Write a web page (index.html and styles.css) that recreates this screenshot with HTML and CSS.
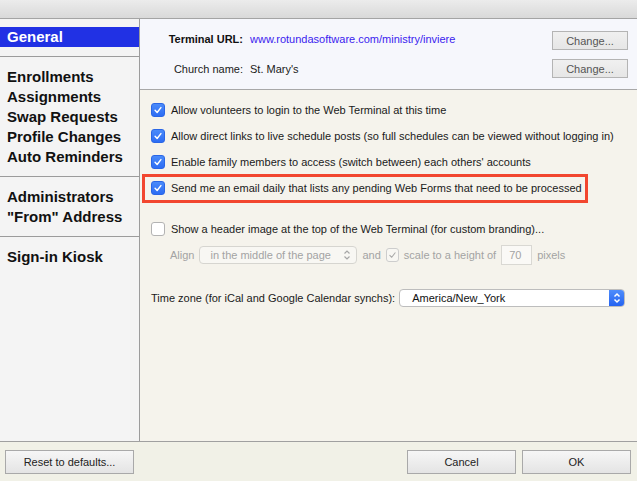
FILE: index.html
```html
<!DOCTYPE html>
<html lang="en">
<head>
  <meta charset="UTF-8">
  <title>Web Terminal Settings</title>
  <link rel="stylesheet" href="styles.css">
</head>
<body>
  <div class="window">
    <div class="titlebar"></div>

    <div class="content">
      <div class="sidebar">
        <ul class="nav-group first">
          <li class="active">General</li>
        </ul>
        <ul class="nav-group">
          <li>Enrollments</li>
          <li>Assignments</li>
          <li>Swap Requests</li>
          <li>Profile Changes</li>
          <li>Auto Reminders</li>
        </ul>
        <ul class="nav-group">
          <li>Administrators</li>
          <li>"From" Address</li>
        </ul>
        <ul class="nav-group">
          <li>Sign-in Kiosk</li>
        </ul>
      </div>

      <div class="main">
        <div class="terminal">
          <span class="label strong">Terminal URL:</span>
          <a class="value link" href="#">www.rotundasoftware.com/ministry/inviere</a>
          <button class="btn change">Change...</button>
          <span class="label">Church name:</span>
          <span class="value">St. Mary's</span>
          <button class="btn change">Change...</button>
        </div>

        <div class="options">
          <div class="row">
            <span class="cb checked"><svg viewBox="0 0 14 14"><path d="M3.6 7.4 L6 9.9 L10.4 4.2"/></svg></span>
            <span>Allow volunteers to login to the Web Terminal at this time</span>
          </div>
          <div class="row">
            <span class="cb checked"><svg viewBox="0 0 14 14"><path d="M3.6 7.4 L6 9.9 L10.4 4.2"/></svg></span>
            <span>Allow direct links to live schedule posts (so full schedules can be viewed without logging in)</span>
          </div>
          <div class="row">
            <span class="cb checked"><svg viewBox="0 0 14 14"><path d="M3.6 7.4 L6 9.9 L10.4 4.2"/></svg></span>
            <span>Enable family members to access (switch between) each others' accounts</span>
          </div>
          <div class="row">
            <span class="highlight">
              <span class="cb checked"><svg viewBox="0 0 14 14"><path d="M3.6 7.4 L6 9.9 L10.4 4.2"/></svg></span>
              <span>Send me an email daily that lists any pending Web Forms that need to be processed</span>
            </span>
          </div>

          <div class="row spaced">
            <span class="cb"></span>
            <span>Show a header image at the top of the Web Terminal (for custom branding)...</span>
          </div>
          <div class="row sub disabled">
            <span>Align</span>
            <span class="select">in the middle of the page
              <svg class="chevrons" viewBox="0 0 8 12"><path d="M1.5 4.5 L4 2 L6.5 4.5 M1.5 7.5 L4 10 L6.5 7.5"/></svg>
            </span>
            <span>and</span>
            <span class="cb dim"><svg viewBox="0 0 14 14"><path d="M3.6 7.4 L6 9.9 L10.4 4.2"/></svg></span>
            <span>scale to a height of</span>
            <span class="num">70</span>
            <span>pixels</span>
          </div>

          <div class="row tz">
            <span>Time zone (for iCal and Google Calendar synchs):</span>
            <span class="tz-select">America/New_York
              <span class="tz-arrows"><svg viewBox="0 0 8 12"><path d="M1.5 4.5 L4 2 L6.5 4.5 M1.5 7.5 L4 10 L6.5 7.5"/></svg></span>
            </span>
          </div>
        </div>
      </div>
    </div>

    <div class="footer">
      <button class="btn reset">Reset to defaults...</button>
      <div class="actions">
        <button class="btn wide">Cancel</button>
        <button class="btn wide">OK</button>
      </div>
    </div>
  </div>
</body>
</html>
```

FILE: styles.css
```css
:root {
  --line: #9c9c9c;
  --blue: #2f6ff5;
  --muted: #a3a3a3;
}
* {
  margin: 0;
  padding: 0;
  box-sizing: border-box;
}
body {
  font-family: 'Liberation Sans', Arial, sans-serif;
  font-size: 11px;
  color: #1a1a1a;
  background: #f1f1e7;
}

.window {
  width: 637px;
  height: 481px;
  display: flex;
  flex-direction: column;
}

.titlebar {
  height: 19px;
  background: linear-gradient(#ececec, #d9d9d9);
  border-bottom: 1px solid #a4a4a4;
}

.content {
  height: 422px;
  display: flex;
}

/* Left navigation */
.sidebar {
  width: 140px;
  flex: none;
  background: #f4f4f4;
  border-right: 1px solid var(--line);
}
.nav-group {
  list-style: none;
  padding: 10px 0 9px;
  border-bottom: 1px solid var(--line);
}
.nav-group.first {
  padding-top: 8px;
}
.nav-group:last-child {
  border-bottom: none;
}
.nav-group li {
  font-size: 15px;
  font-weight: bold;
  line-height: 20px;
  padding-left: 7px;
  color: #111;
}
.nav-group li.active {
  background: #2131e4;
  color: #fff;
}

.main {
  flex: 1;
  display: flex;
  flex-direction: column;
  background: #f5f3ec;
}

/* Terminal url / church name */
.terminal {
  display: grid;
  grid-template-columns: 103px 1fr 76px;
  grid-auto-rows: 19px;
  column-gap: 7px;
  row-gap: 9px;
  align-items: center;
  padding: 12px 9px 11px 0;
  background: #f6f7fc;
  border-bottom: 1px solid #a8a8a8;
}
.label {
  text-align: right;
}
.label.strong {
  font-weight: bold;
  color: #111;
  margin-top: -3px;
}
.value.link {
  color: #3a1cef;
  text-decoration: none;
  margin-top: -3px;
}

.btn {
  font-family: 'Liberation Sans', Arial, sans-serif;
  font-size: 11px;
  color: #222;
  background: linear-gradient(#f6f6f6, #e4e4e4);
  border: 1px solid #a9a9a9;
  border-radius: 0;
  height: 19px;
}
.btn.change {
  color: #555;
  background: linear-gradient(#f0f0f0, #e6e6e6);
  border-color: #b4b4b4;
}

/* Options list */
.options {
  padding: 7px 11px 0 11px;
}
.row {
  display: flex;
  align-items: center;
  gap: 6px;
  height: 26px;
  white-space: nowrap;
}
.row.spaced {
  margin-top: 15px;
}
.row.sub {
  padding-left: 19px;
  gap: 5px;
}
.row.disabled {
  color: var(--muted);
}
.row.tz {
  margin-top: 17px;
  gap: 4px;
}

.highlight {
  display: inline-flex;
  align-items: center;
  gap: 6px;
  height: 23px;
  padding: 0 3px 0 6px;
  margin-left: -6px;
  outline: 3px solid #f2462f;
}

.cb {
  width: 14px;
  height: 14px;
  flex: none;
  border-radius: 3px;
  background: #fff;
  border: 1px solid #b3b3b3;
  display: inline-flex;
}
.cb svg {
  width: 100%;
  height: 100%;
  fill: none;
  stroke: #fff;
  stroke-width: 1.7;
  stroke-linecap: round;
  stroke-linejoin: round;
}
.cb.checked {
  background: linear-gradient(#4a8bfa, #2d6df4);
  border: 1px solid #2a66e6;
}
.cb.dim {
  width: 13px;
  background: #f8f7f3;
  border-color: #cdcdcd;
}
.cb.dim svg {
  stroke: #a8a8a8;
  stroke-width: 1.3;
}

.select {
  width: 158px;
  height: 18px;
  display: inline-flex;
  align-items: center;
  justify-content: space-between;
  padding: 0 5px 0 10px;
  border: 1px solid #d6d5d0;
  border-radius: 4px;
  background: #f8f7f3;
}
.chevrons {
  width: 8px;
  height: 12px;
  fill: none;
  stroke: #a6a6a6;
  stroke-width: 1.2;
}

.num {
  width: 31px;
  height: 20px;
  display: inline-flex;
  align-items: center;
  padding-left: 7px;
  border: 1px solid #d9d8d3;
  background: #faf9f6;
}

.tz-select {
  width: 226px;
  height: 18px;
  display: inline-flex;
  align-items: center;
  justify-content: space-between;
  padding-left: 12px;
  border: 1px solid #bdbdbd;
  border-radius: 4px;
  background: #fff;
  color: #111;
  overflow: hidden;
}
.tz-arrows {
  width: 15px;
  height: 100%;
  display: inline-flex;
  align-items: center;
  justify-content: center;
  background: linear-gradient(#4f8dfb, #2563f1);
}
.tz-arrows svg {
  width: 8px;
  height: 12px;
  fill: none;
  stroke: #fff;
  stroke-width: 1.5;
}

/* Bottom buttons */
.footer {
  height: 40px;
  display: flex;
  justify-content: space-between;
  padding: 8px 6px 0 5px;
  border-top: 1px solid #a0a0a0;
  background: #f1f1e7;
}
.footer .btn {
  height: 24px;
}
.btn.reset {
  width: 129px;
}
.actions {
  display: flex;
  gap: 6px;
}
.btn.wide {
  width: 109px;
}
```
